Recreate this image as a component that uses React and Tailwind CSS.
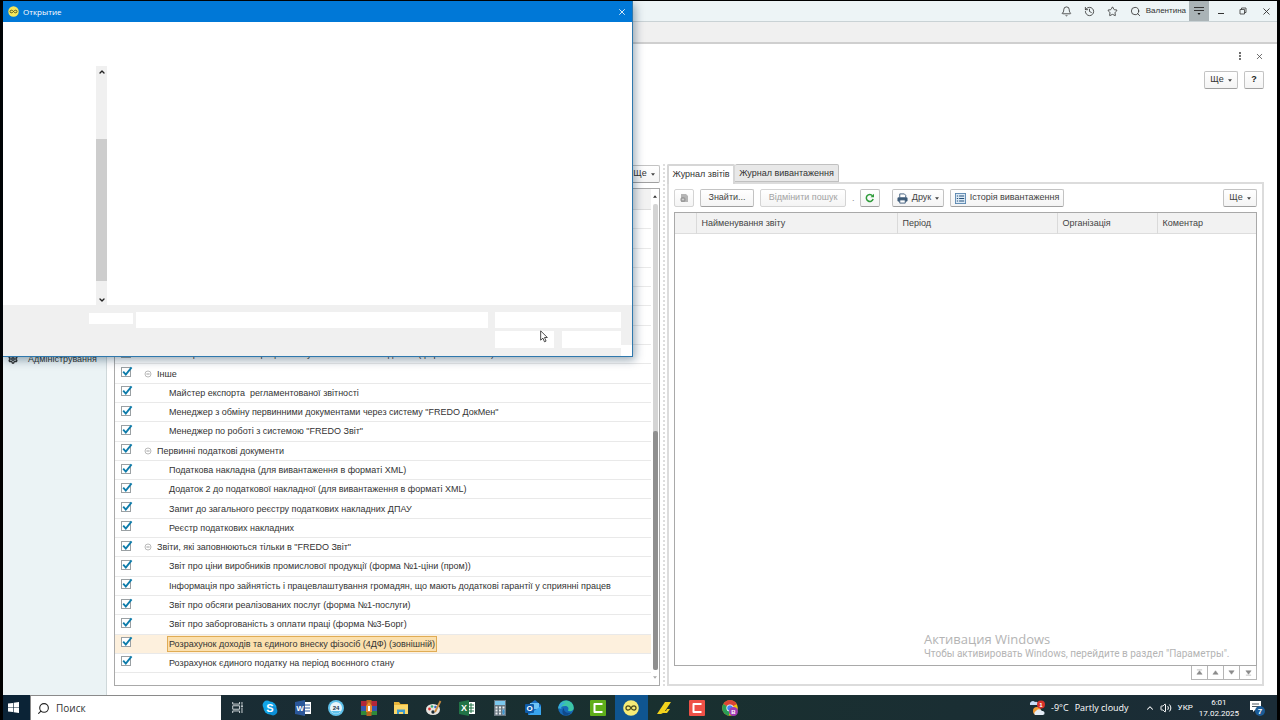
import React from 'react';
import { Bell, History, Star, Search, X, MoreVertical, ChevronUp, ChevronDown, Settings, Volume2 } from 'lucide-react';

const reports = [
  { name: '' },
  { name: '' },
  { name: '' },
  { name: '' },
  { name: '' },
  { name: '' },
  { name: '' },
  { name: 'Звіт про зайнятість і працевлаштування осіб з інвалідністю (форма №10-ПОІ)' },
  { name: 'Інше', group: true },
  { name: 'Майстер експорта  регламентованої звітності' },
  { name: 'Менеджер з обміну первинними документами через систему "FREDO ДокМен"' },
  { name: 'Менеджер по роботі з системою "FREDO Звіт"' },
  { name: 'Первинні податкові документи', group: true },
  { name: 'Податкова накладна (для вивантаження в форматі XML)' },
  { name: 'Додаток 2 до податкової накладної (для вивантаження в форматі XML)' },
  { name: 'Запит до загального реєстру податкових накладних ДПАУ' },
  { name: 'Реєстр податкових накладних' },
  { name: 'Звіти, які заповнюються тільки в "FREDO Звіт"', group: true },
  { name: 'Звіт про ціни виробників промислової продукції (форма №1-ціни (пром))' },
  { name: 'Інформація про зайнятість і працевлаштування громадян, що мають додаткові гарантії у сприянні працев' },
  { name: 'Звіт про обсяги реалізованих послуг (форма №1-послуги)' },
  { name: 'Звіт про заборгованість з оплати праці (форма №3-Борг)' },
  { name: 'Розрахунок доходів та єдиного внеску фізосіб (4ДФ) (зовнішній)', selected: true },
  { name: 'Розрахунок єдиного податку на період воєнного стану' }
];

const Caret = () => (
  <svg viewBox="0 0 6 4" className="w-1 h-[3px] shrink-0">
    <path d="M0 0h6L3 4z" fill="#444" />
  </svg>
);

const ToolButton = ({ children, className = '', ...props }) => (
  <button
    type="button"
    className={`h-[18px] shrink-0 flex items-center justify-center gap-1 rounded-[2px] border border-[#c3c3c3] border-b-[#a0a0a0] bg-linear-to-b from-white to-[#f4f4f4] text-[9px] whitespace-nowrap disabled:border-[#d4d4d4] ${className}`}
    {...props}
  >
    {children}
  </button>
);

// Yellow round logo of the accounting program
const AppLogo = ({ className }) => (
  <svg viewBox="0 0 16 16" className={className}>
    <circle cx="8" cy="8" r="7.6" fill="#f6e75a" />
    <path d="M8 8C6.6 5.6 3 5.4 3 8s3.6 2.4 5 0 5-2.6 5 0-3.6 2.4-5 0z" fill="none" stroke="#4b4a1c" strokeWidth="1.3" />
  </svg>
);

const TitleBar = () => (
  <header className="h-[21px] shrink-0 flex items-center justify-end bg-[#edf4f6] border-b border-[#c9d2d5] text-[#333]">
    <div className="flex items-center gap-3 mr-[5px]">
      <button type="button" aria-label="Сповіщення"><Bell className="size-[11px]" strokeWidth={1.8} /></button>
      <button type="button" aria-label="Історія"><History className="size-[11px]" strokeWidth={1.8} /></button>
      <button type="button" aria-label="Обране"><Star className="size-[11px]" strokeWidth={1.8} /></button>
      <button type="button" aria-label="Пошук"><Search className="size-[11px]" strokeWidth={1.8} /></button>
    </div>
    <span className="text-[8px] mr-[3px]">Валентина</span>
    <button type="button" aria-label="Меню" className="w-5 h-5 flex items-center justify-center bg-[#aab3b6]">
      <svg viewBox="0 0 10 8" className="w-[10px] h-2">
        <path d="M0 .5h10M0 3.5h10" stroke="#333" strokeWidth="1" />
        <path d="M3.5 6h3L5 8z" fill="#111" />
      </svg>
    </button>
    <div className="flex items-center ml-2 mr-[5px] gap-[14px]">
      <button type="button" aria-label="Згорнути">
        <svg viewBox="0 0 8 8" className="size-2"><path d="M1 6.5h6" stroke="#333" /></svg>
      </button>
      <button type="button" aria-label="Розгорнути">
        <svg viewBox="0 0 8 8" className="size-2">
          <path d="M1 2.5h4.5v4.5H1zM2.5 2.5V1H7v4.5H5.5" fill="none" stroke="#333" strokeWidth=".8" />
        </svg>
      </button>
      <button type="button" aria-label="Закрити"><X className="size-[11px]" strokeWidth={2} /></button>
    </div>
  </header>
);

const ReportRow = ({ report, index }) => {
  const id = `report-${index}`;
  return (
    <li className={`flex-1 min-h-[18px] flex items-center pl-[6px] border-b border-[#e9e9e9] ${report.selected ? 'bg-[#fdf0dd]' : ''}`}>
      <span className="relative w-[11px] h-[13px] shrink-0">
        <input
          id={id}
          type="checkbox"
          defaultChecked
          aria-label={report.name || 'Звіт'}
          className="peer block size-[10px] appearance-none border border-[#9aa0a3] bg-white"
        />
        <svg viewBox="0 0 12 12" className="absolute -top-px left-0 size-3 pointer-events-none invisible peer-checked:visible">
          <path d="M2.2 5.6L4.8 8.6L10.6 1.4" fill="none" stroke="#0d7cab" strokeWidth="1.9" />
        </svg>
      </span>
      {report.group ? (
        <button type="button" aria-label="Згорнути групу" className="ml-3 mr-[3px]">
          <svg viewBox="0 0 8 8" className="size-2">
            <circle cx="4" cy="4" r="3" fill="none" stroke="#aaa" strokeWidth=".8" />
            <path d="M2.4 4h3.2" stroke="#888" strokeWidth=".8" />
          </svg>
        </button>
      ) : (
        <span className="w-[35px] shrink-0" />
      )}
      <label
        htmlFor={id}
        className={`px-px border whitespace-pre text-[9px] leading-[14px] ${report.selected ? 'border-[#e0ac55] bg-[#fbe0ae]' : 'border-transparent'}`}
      >
        {report.name}
      </label>
    </li>
  );
};

const ReportList = () => (
  <section className="grow-[546] basis-0 min-w-0 flex flex-col">
    <div className="flex justify-end h-6 pt-px">
      <ToolButton className="w-8">Ще <Caret /></ToolButton>
    </div>
    <div className="flex-1 flex border border-[#a9a9a9]">
      <div className="flex-1 min-w-0 flex flex-col pb-3">
        <div className="h-[21px] shrink-0 bg-[#f2f2f2] border-b border-[#ddd]" />
        <ul className="flex-1 flex flex-col overflow-hidden">
          {reports.map((report, index) => (
            <ReportRow key={index} report={report} index={index} />
          ))}
        </ul>
      </div>
      <div className="w-2 flex flex-col items-center py-[6px]">
        <svg viewBox="0 0 6 4" className="w-1 h-[3px]"><path d="M0 4h6L3 0z" fill="#333" /></svg>
        <div className="flex-1 w-[5px] mt-[6px] mb-[6px] flex flex-col rounded-[2px] bg-[#d4d4d4]">
          <div className="grow-[227]" />
          <div className="grow-[239] rounded-[2px] bg-[#8f8f8f]" />
        </div>
        <svg viewBox="0 0 6 4" className="w-1 h-[3px]"><path d="M0 0h6L3 4z" fill="#aaa" /></svg>
      </div>
    </div>
  </section>
);

const scrollIcons = [
  { label: 'На початок', d: 'M1 1h6M4 2L7 6H1z' },
  { label: 'Вгору', d: 'M4 2L7 6H1z' },
  { label: 'Вниз', d: 'M4 6L7 2H1z' },
  { label: 'В кінець', d: 'M1 7h6M4 6L7 2H1z' }
];

const Journal = () => (
  <section className="grow-[597] basis-0 min-w-0 flex flex-col text-[9px] text-[#444]">
    <div className="flex h-[18px] shrink-0" role="tablist">
      <button type="button" role="tab" aria-selected="true" className="relative z-10 w-[68px] h-5 pb-px rounded-t-[2px] border-2 border-b-0 border-[#d6d6d6] bg-white text-[#333] whitespace-nowrap">
        Журнал звітів
      </button>
      <button type="button" role="tab" aria-selected="false" className="w-[104px] pt-[2px] rounded-t-[2px] border border-[#c0c0c0] border-l-0 bg-[#e8e8e8] text-[#333] whitespace-nowrap">
        Журнал вивантаження
      </button>
    </div>
    <div className="flex-1 flex flex-col border-2 border-[#dcdcdc] px-[5px] pt-[5px] pb-1">
      <div className="flex items-center gap-[6px] mb-[5px]">
        <ToolButton className="w-5" disabled aria-label="Відкрити">
          <svg viewBox="0 0 10 10" className="size-[10px]">
            <path d="M2 1h5l2 2v6H2z" fill="#b5b5b5" />
            <circle cx="4" cy="6.5" r="2.6" fill="#9a9a9a" />
            <path d="M2.8 6.5h2.4M4 5.3v2.4" stroke="#ddd" strokeWidth=".7" />
          </svg>
        </ToolButton>
        <ToolButton className="w-[54px]">Знайти...</ToolButton>
        <ToolButton className="w-[86px] text-[#a3a3a3]" disabled>Відмінити пошук</ToolButton>
        <span className="w-[2px] text-[#888] leading-[18px]">.</span>
        <ToolButton className="w-5" aria-label="Оновити">
          <svg viewBox="0 0 12 12" className="size-[10px]">
            <path d="M9.8 7.2A4.2 4.2 0 1 1 9 3.2" fill="none" stroke="#2f9c3b" strokeWidth="1.8" />
            <path d="M10.8 .8v4.4H6.6z" fill="#2f9c3b" />
          </svg>
        </ToolButton>
        <ToolButton className="w-[52px] ml-[6px]">
          <svg viewBox="0 0 12 12" className="size-[11px]">
            <path d="M3 5V1h5l1.5 1.5V5" fill="#fff" stroke="#3c5a78" />
            <rect x=".5" y="4.5" width="11" height="5" rx="1.5" fill="#3c5a78" />
            <path d="M3 7.5h6v3.5H3z" fill="#fff" stroke="#3c5a78" />
          </svg>
          Друк <Caret />
        </ToolButton>
        <ToolButton className="w-[114px]">
          <svg viewBox="0 0 12 12" className="size-[11px]">
            <rect x=".5" y=".5" width="11" height="11" fill="#dceaf6" stroke="#5b88b0" />
            <path d="M4.5 3.2H10M4.5 6H10M4.5 8.8H10M2 3.2h1.4M2 6h1.4M2 8.8h1.4" stroke="#24507a" strokeWidth="1.1" />
          </svg>
          Історія вивантаження
        </ToolButton>
        <ToolButton className="w-[34px] ml-auto">Ще <Caret /></ToolButton>
      </div>
      <div className="relative flex-1 border border-[#a9a9a9]">
        <table className="w-full table-fixed border-collapse">
          <colgroup>
            <col className="w-[21px]" />
            <col className="w-[201px]" />
            <col className="w-[160px]" />
            <col className="w-[100px]" />
            <col />
          </colgroup>
          <thead>
            <tr className="h-5 leading-4 bg-[#f2f2f2] border-b border-[#ddd] text-left">
              <th className="border-r border-[#dadada]" />
              <th className="border-r border-[#dadada] px-[5px] font-normal">Найменування звіту</th>
              <th className="border-r border-[#dadada] px-[5px] font-normal">Період</th>
              <th className="border-r border-[#dadada] px-[5px] font-normal">Організація</th>
              <th className="px-[5px] font-normal">Коментар</th>
            </tr>
          </thead>
          <tbody />
        </table>
        <div className="absolute right-7 bottom-1 w-[304px] text-[#b4b4b4] whitespace-nowrap">
          <p className="text-[13px] leading-4 font-['Open_Sans',sans-serif]">Активация Windows</p>
          <p className="text-[10px] leading-[14px] font-[Roboto,sans-serif]">Чтобы активировать Windows, перейдите в раздел "Параметры".</p>
        </div>
      </div>
      <div className="flex self-end h-[14px] border border-t-0 border-[#b5b5b5] divide-x divide-[#b5b5b5]">
        {scrollIcons.map((icon) => (
          <button key={icon.label} type="button" aria-label={icon.label} className="w-4 flex items-center justify-center">
            <svg viewBox="0 0 8 8" className="size-[7px]"><path d={icon.d} fill="#8a8a8a" stroke="#8a8a8a" strokeWidth=".6" /></svg>
          </button>
        ))}
      </div>
    </div>
  </section>
);

const OpenDialog = () => (
  <div role="dialog" aria-label="Открытие" className="absolute left-[3px] top-px z-20 w-[630px] h-[356px] flex flex-col bg-white border-r border-b border-[#2f78ad] shadow-[2px_3px_9px_rgba(0,40,70,0.4)]">
    <div className="h-[21px] shrink-0 flex items-center gap-1 pl-[5px] pr-[5px] bg-[#0078d7] text-white font-['Open_Sans',sans-serif] text-[8px]">
      <AppLogo className="size-[11px]" />
      <span className="flex-1">Открытие</span>
      <button type="button" aria-label="Закрыть"><X className="size-[10px]" strokeWidth={2} /></button>
    </div>
    <div className="flex-1 pt-11 pl-[93px] flex">
      <div className="w-[11px] flex flex-col items-center bg-[#f0f0f0] text-[#222]">
        <ChevronUp className="size-2 mt-[2px] shrink-0" strokeWidth={4} />
        <div className="grow-[63]" />
        <div className="grow-[142] w-full bg-[#cdcdcd]" />
        <div className="grow-[15]" />
        <ChevronDown className="size-2 mb-px shrink-0" strokeWidth={4} />
      </div>
    </div>
    <div className="h-[51px] shrink-0 flex gap-[7px] pt-[7px] pl-[86px] pr-[11px] bg-[#f0f0f0]">
      <div className="flex-1 flex gap-[3px]">
        <span className="w-11 h-[11px] mt-px bg-white" />
        <input aria-label="Имя файла" className="flex-1 h-4 bg-white outline-none" />
      </div>
      <div className="w-[126px] flex flex-col gap-[3px]">
        <select aria-label="Тип файлов" className="h-4 appearance-none bg-white" />
        <div className="flex justify-between">
          <button type="button" aria-label="Открыть" className="w-[59px] h-[17px] bg-white" />
          <button type="button" aria-label="Отмена" className="w-[59px] h-[17px] bg-white" />
        </div>
      </div>
    </div>
    <span className="absolute right-0 bottom-0 w-[11px] h-[11px] bg-white" />
    <svg viewBox="0 0 12 19" className="absolute left-[537px] top-[329px] w-2 h-[13px]">
      <path d="M1 1v14l3.4-3 2.3 5.4 2.4-1L6.8 11H11z" fill="#fff" stroke="#222" strokeWidth="1.2" />
    </svg>
  </div>
);

const Glyph = ({ x, y, size, children, fill = '#fff' }) => (
  <text x={x} y={y} fontSize={size} fill={fill} textAnchor="middle" fontWeight="bold" fontFamily="Liberation Sans, sans-serif">{children}</text>
);

const taskbarApps = [
  {
    label: 'Представление задач',
    art: <g fill="none" stroke="#dfe5e8" strokeWidth="1.3"><path d="M1 0v3h10V0M1 16v-3h10v3M1 5.5h10v5H1zM14.5 0v4M14.5 8v8" /><path d="M13 6h3" strokeWidth="2" /></g>
  },
  {
    label: 'Skype',
    art: <g><circle cx="8" cy="8" r="6.5" fill="#12a5e8" /><circle cx="5" cy="5" r="4.4" fill="#12a5e8" /><circle cx="11" cy="11" r="4.4" fill="#0b8fd6" /><Glyph x={8} y={12} size={11}>S</Glyph></g>
  },
  {
    label: 'Word',
    art: <g><rect x="8" y="2" width="8" height="12" fill="#fff" /><path d="M10 5h5M10 8h5M10 11h5" stroke="#2b579a" /><path d="M0 2l10-2v16L0 14z" fill="#2b579a" /><Glyph x={5} y={11} size={8}>W</Glyph></g>
  },
  {
    label: 'Приват24',
    art: <g><circle cx="8" cy="8" r="8" fill="#5fc1ea" /><circle cx="8" cy="8" r="6" fill="#e8f5fb" /><path d="M3 11h10a6 6 0 0 1-10 0z" fill="#5fc1ea" /><Glyph x={8} y={10} size={6} fill="#234">24</Glyph></g>
  },
  {
    label: 'WinRAR',
    art: <g><rect y="1" width="16" height="5" fill="#b3263a" /><rect y="6" width="16" height="5" fill="#3757b0" /><rect y="11" width="16" height="4" fill="#2f8a3b" /><rect x="5.5" width="5" height="16" fill="#b5651f" /><path d="M5 12V6l3-4 3 4v6z" fill="#e88a2a" /><path d="M7 6h2v5H7z" fill="#fff" /></g>
  },
  {
    label: 'Проводник',
    art: <g><path d="M1 2h5l1.5 2H15v10H1z" fill="#e9b53a" /><path d="M1 5h14v9H1z" fill="#fbd768" /><path d="M4 14V9.5h8V14h-2v-2H6v2z" fill="#3f9ccf" /></g>
  },
  {
    label: 'Paint',
    art: <g><ellipse cx="7" cy="9.5" rx="7" ry="5.5" fill="#e8e6e1" /><circle cx="3.5" cy="9" r="1.4" fill="#d33" /><circle cx="6" cy="6.5" r="1.3" fill="#3a7" /><circle cx="9.5" cy="7" r="1.3" fill="#36c" /><circle cx="7" cy="12" r="1.7" fill="#1c2b35" /><path d="M14.5 1L9 12" stroke="#c98a3f" strokeWidth="1.8" /></g>
  },
  {
    label: 'Excel',
    art: <g><rect x="8" y="2" width="8" height="12" fill="#fff" /><path d="M9 5h6M9 8h6M9 11h6M12 3v10" stroke="#217346" /><path d="M0 2l10-2v16L0 14z" fill="#217346" /><Glyph x={5} y={11} size={9}>X</Glyph></g>
  },
  {
    label: 'Калькулятор',
    art: <g><rect x="2" width="12" height="16" fill="#68757f" /><rect x="3" y="1" width="10" height="4" fill="#7cc8ee" /><path d="M3.5 7.5h9M3.5 10.5h9M3.5 13.5h9" stroke="#e9edf0" strokeWidth="2" strokeDasharray="2 1.5" /><path d="M10.5 9.5h2v5h-2z" fill="#3c97d3" /></g>
  },
  {
    label: 'Outlook',
    art: <g><path d="M3 5l7-5 6 5v10H3z" fill="#1b6fc4" /><path d="M5 3h9v6H5z" fill="#6fc3f5" /><path d="M3 15l13-9v9z" fill="#39a5ee" /><rect y="4" width="9" height="9" rx="1" fill="#0f5ba8" /><Glyph x={4.5} y={11} size={8}>O</Glyph></g>
  },
  {
    label: 'Edge',
    art: <g><circle cx="8" cy="8" r="7.8" fill="#1769b8" /><path d="M.5 7A7.7 7.7 0 0 1 15.8 8c0 3-3.6 3.8-6 2.6 1.6-2 .3-4.6-2.4-4.6C4 6 1.5 7.5.5 9z" fill="#3dc6a5" /><path d="M.3 8C1 3.5 4 1.5 8 3c-3 .5-5.2 3-4.6 6z" fill="#36a9e0" /><path d="M6 8c-.6 3 2 5.6 7 4.6-1.4 2-4 3-6 2.8C4 14.5 3.6 10 6 8z" fill="#104a8a" /></g>
  },
  {
    label: 'Camtasia',
    art: <g><rect width="16" height="16" rx="1" fill="#5fae1a" /><path d="M12.5 4H4.5v8h8" fill="none" stroke="#fff" strokeWidth="2" strokeLinejoin="round" /></g>
  },
  {
    label: 'BAS',
    active: true,
    art: <g><circle cx="8" cy="8" r="7.8" fill="#f6ec77" /><path d="M8 8C6.6 5.4 3 5.2 3 8s3.6 2.6 5 0 5-2.8 5 0-3.6 2.6-5 0z" fill="none" stroke="#4b4a1c" strokeWidth="1.3" /></g>
  },
  {
    label: 'M.E.Doc',
    art: <g fill="#f2d21c"><path d="M9 2h6L9 11H3z" /><path d="M11 9h3l-3 4H7l-2 1H1l2-3h7z" /></g>
  },
  {
    label: 'Camtasia Recorder',
    art: <g><rect width="16" height="16" rx="1" fill="#ee5147" /><path d="M12.5 4H4.5v8h8" fill="none" stroke="#fff" strokeWidth="2" strokeLinejoin="round" /></g>
  },
  {
    label: 'Chrome',
    art: <g><circle cx="8" cy="8" r="7.8" fill="#f4c20d" /><path d="M8 8L1.3 4A7.8 7.8 0 0 1 14.8 4z" fill="#db4437" /><path d="M8 8L1.3 4A7.8 7.8 0 0 0 7 15.7z" fill="#2a9d55" /><circle cx="8" cy="8" r="3.6" fill="#fff" /><circle cx="8" cy="8" r="2.8" fill="#4285f4" /><circle cx="11.5" cy="11.5" r="4.5" fill="#a13cb4" /><Glyph x={11.5} y={14} size={6}>В</Glyph></g>
  }
];

const Taskbar = () => (
  <footer className="h-[25px] shrink-0 flex items-stretch bg-linear-to-r from-[#1a2a37] via-[#19302f] to-[#1b2c37] text-white font-['Open_Sans',sans-serif]">
    <button type="button" aria-label="Пуск" className="w-[27px] flex items-center pl-[5px] bg-[#0b2336]">
      <svg viewBox="0 0 12 12" className="size-[11px]"><path d="M0 1.7L5.5 1v4.7H0zM6.2.9L12 0v5.7H6.2zM0 6.4h5.5V11L0 10.3zM6.2 6.4H12V12l-5.8-.9z" fill="#fff" /></svg>
    </button>
    <label className="w-[191px] flex items-center gap-[6px] pl-[6px] bg-white border-t border-l border-[#8a8a8a] text-[#222]">
      <Search className="size-[13px] -scale-x-100" strokeWidth={2} />
      <input type="search" aria-label="Поиск" placeholder="Поиск" className="w-32 text-[10px] outline-none placeholder:text-[#333]" />
    </label>
    <nav className="w-[525px] flex">
      {taskbarApps.map((app) => (
        <button key={app.label} type="button" aria-label={app.label} className={`flex-1 flex items-center justify-center ${app.active ? 'bg-[#0f5590]' : ''}`}>
          <svg viewBox="0 0 16 16" className={app.label === 'Представление задач' ? 'size-[11px]' : 'size-4'}>{app.art}</svg>
        </button>
      ))}
    </nav>
    <div className="flex-1 flex items-center justify-end pr-3 text-[9px] whitespace-nowrap">
      <svg viewBox="0 0 16 16" className="size-4 mr-[6px]">
        <path d="M1 5a3 3 0 0 1 5-3 3 3 0 0 1 4 3z" fill="#c9dcf5" />
        <circle cx="8" cy="11" r="4" fill="#f39a32" />
        <path d="M6 15a2.5 2.5 0 0 1 1-4 3.5 3.5 0 0 1 6 0 2 2 0 0 1 1 4z" fill="#e4ecf6" />
        <circle cx="12" cy="4.5" r="4" fill="#d8322b" />
        <Glyph x={12} y={7} size={6}>1</Glyph>
      </svg>
      <span className="mr-[6px]">-9°C</span>
      <span className="mr-4">Partly cloudy</span>
      <ChevronUp className="size-[10px] mr-[5px]" strokeWidth={2.5} />
      <Volume2 className="size-3 mr-[6px]" strokeWidth={2} />
      <div className="flex items-center font-[Roboto,sans-serif] text-[8px]">
        <span className="mr-[6px]">УКР</span>
        <div className="leading-[11px] text-center mr-[10px]">
          <div>6:01</div>
          <div>17.02.2025</div>
        </div>
      </div>
      <svg viewBox="0 0 16 16" className="size-4">
        <path d="M1 1h11v9H6l-2 2v-2H1z" fill="#fff" />
        <path d="M3 4h7M3 6.5h7" stroke="#1b2c37" strokeWidth=".8" />
        <circle cx="11" cy="11" r="5" fill="#1b5b96" />
        <Glyph x={11} y={14} size={8}>7</Glyph>
      </svg>
    </div>
  </footer>
);

export default function App() {
  return (
    <div className="relative min-h-screen flex flex-col bg-black px-[3px] pt-px font-['Liberation_Sans',Arial,sans-serif] text-[#333]">
      <TitleBar />
      <div className="h-[22px] shrink-0 bg-[#f0f0f0] border-b-2 border-[#cfcfcf]" />
      <div className="flex-1 flex bg-white">
        <aside className="w-[104px] shrink-0 bg-[#ebf3f5] border-r border-[#cfd8da] pt-[309px]">
          <button type="button" className="flex items-center gap-[10px] pl-[5px] text-[9px] leading-3">
            <Settings className="size-[10px]" strokeWidth={3.5} />
            Адміністрування
          </button>
        </aside>
        <main className="flex-1 min-w-0 flex flex-col pl-[7px] pr-[13px] pb-[9px]">
          <div className="h-6 shrink-0 flex items-center justify-end gap-[10px] text-[#444]">
            <button type="button" aria-label="Додатково"><MoreVertical className="size-[10px]" strokeWidth={3} /></button>
            <button type="button" aria-label="Закрити вкладку"><X className="size-[9px]" strokeWidth={2} /></button>
          </div>
          <div className="h-24 pt-[3px] shrink-0 flex justify-end gap-[6px]">
            <ToolButton className="w-[34px]">Ще <Caret /></ToolButton>
            <ToolButton className="w-5 font-bold text-[#222]">?</ToolButton>
          </div>
          <div className="flex-1 flex">
            <ReportList />
            <div className="w-[7px] shrink-0 flex justify-center">
              <div className="border-l-2 border-dotted border-[#ddd]" />
            </div>
            <Journal />
          </div>
        </main>
      </div>
      <Taskbar />
      <OpenDialog />
    </div>
  );
}
